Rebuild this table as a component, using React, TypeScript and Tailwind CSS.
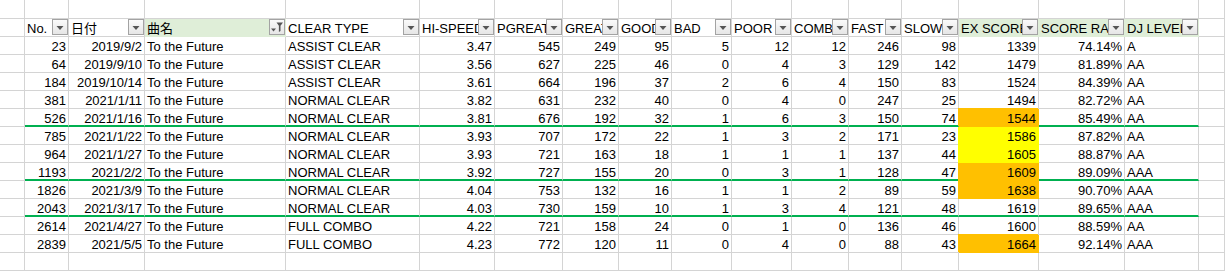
import React from "react";

type Col = { w: string; label: string; align: "l" | "r"; green?: boolean; filtered?: boolean };

const cols: Col[] = [
  { w: "w-[25px]", label: "", align: "l" },
  { w: "w-[44px]", label: "No.", align: "r" },
  { w: "w-[76px]", label: "日付", align: "r" },
  { w: "w-[141px]", label: "曲名", align: "l", green: true, filtered: true },
  { w: "w-[134px]", label: "CLEAR TYPE", align: "l" },
  { w: "w-[75px]", label: "HI-SPEED", align: "r" },
  { w: "w-[68px]", label: "PGREAT", align: "r" },
  { w: "w-[56px]", label: "GREAT", align: "r" },
  { w: "w-[53px]", label: "GOOD", align: "r" },
  { w: "w-[60px]", label: "BAD", align: "r" },
  { w: "w-[60px]", label: "POOR", align: "r" },
  { w: "w-[57px]", label: "COMBO", align: "r" },
  { w: "w-[53px]", label: "FAST", align: "r" },
  { w: "w-[57px]", label: "SLOW", align: "r" },
  { w: "w-[80px]", label: "EX SCORE", align: "r", green: true },
  { w: "w-[86px]", label: "SCORE RATE", align: "r", green: true },
  { w: "w-[74px]", label: "DJ LEVEL", align: "l", green: true },
  { w: "flex-1", label: "", align: "l" },
];

// fill: o = orange, y = yellow, O = orange covering the gridline above too
type Row = { v: string[]; fill?: "o" | "y" | "O"; line?: boolean };

const rows: Row[] = [
  { v: ["23", "2019/9/2", "ASSIST CLEAR", "3.47", "545", "249", "95", "5", "12", "12", "246", "98", "1339", "74.14%", "A"] },
  { v: ["64", "2019/9/10", "ASSIST CLEAR", "3.56", "627", "225", "46", "0", "4", "3", "129", "142", "1479", "81.89%", "AA"] },
  { v: ["184", "2019/10/14", "ASSIST CLEAR", "3.61", "664", "196", "37", "2", "6", "4", "150", "83", "1524", "84.39%", "AA"] },
  { v: ["381", "2021/1/11", "NORMAL CLEAR", "3.82", "631", "232", "40", "0", "4", "0", "247", "25", "1494", "82.72%", "AA"] },
  { v: ["526", "2021/1/16", "NORMAL CLEAR", "3.81", "676", "192", "32", "1", "6", "3", "150", "74", "1544", "85.49%", "AA"], fill: "O", line: true },
  { v: ["785", "2021/1/22", "NORMAL CLEAR", "3.93", "707", "172", "22", "1", "3", "2", "171", "23", "1586", "87.82%", "AA"], fill: "y" },
  { v: ["964", "2021/1/27", "NORMAL CLEAR", "3.93", "721", "163", "18", "1", "1", "1", "137", "44", "1605", "88.87%", "AA"], fill: "y" },
  { v: ["1193", "2021/2/2", "NORMAL CLEAR", "3.92", "727", "155", "20", "0", "3", "1", "128", "47", "1609", "89.09%", "AAA"], fill: "o", line: true },
  { v: ["1826", "2021/3/9", "NORMAL CLEAR", "4.04", "753", "132", "16", "1", "1", "2", "89", "59", "1638", "90.70%", "AAA"], fill: "o" },
  { v: ["2043", "2021/3/17", "NORMAL CLEAR", "4.03", "730", "159", "10", "1", "3", "4", "121", "48", "1619", "89.65%", "AAA"], line: true },
  { v: ["2614", "2021/4/27", "FULL COMBO", "4.22", "721", "158", "24", "0", "1", "0", "136", "46", "1600", "88.59%", "AA"] },
  { v: ["2839", "2021/5/5", "FULL COMBO", "4.23", "772", "120", "11", "0", "4", "0", "88", "43", "1664", "92.14%", "AAA"], fill: "O" },
];

const fillCls = {
  o: "bg-[#FFC000] border-r-[#FFC000] border-b-[#FFC000] shadow-[-1px_0_0_#FFC000]",
  O: "bg-[#FFC000] border-r-[#FFC000] border-b-[#FFC000] shadow-[-1px_-1px_0_#FFC000]",
  y: "bg-[#FFFF00] border-r-[#FFFF00] border-b-[#FFFF00] shadow-[-1px_0_0_#FFFF00]",
};

const FilterButton = ({ filtered }: { filtered?: boolean }) => (
  <div className="w-[16px] h-[16px] shrink-0 border border-[#a3a3a3] bg-gradient-to-b from-[#fafafa] to-[#e6e6e6] flex items-center justify-center">
    {filtered ? (
      <svg width="14" height="14" viewBox="0 0 14 14">
        <path d="M1 8.5h5l-2.5 3z" fill="#555" />
        <path d="M6.5 2.5h6.5l-2.5 3.2v5.3l-1.6 1v-6.3z" fill="#555" />
      </svg>
    ) : (
      <svg width="14" height="14" viewBox="0 0 14 14">
        <path d="M3.5 6h7l-3.5 4z" fill="#555" />
      </svg>
    )}
  </div>
);

const base = "h-[18px] box-border border-r border-b border-[#d4d4d4] shrink-0 overflow-hidden whitespace-nowrap leading-[17px] pt-px";

export default function App() {
  return (
    <div className="w-[1225px] h-[271px] bg-white overflow-hidden text-[13px] text-black font-['Liberation_Sans','Noto_Sans_CJK_JP',sans-serif]">
      {/* empty first row */}
      <div className="flex h-[19px]">
        {cols.map((c, i) => (
          <div key={i} className={`${c.w} h-[19px] box-border border-r border-b border-[#d4d4d4] shrink-0`} />
        ))}
      </div>
      {/* header row with filter buttons */}
      <div className="flex">
        {cols.map((c, i) =>
          c.label ? (
            <div
              key={i}
              className={`${c.w} h-[18px] box-border border-r border-b shrink-0 flex ${
                c.green ? "bg-[#dfeed8] border-[#dfeed8]" : "border-[#d4d4d4]"
              }`}
            >
              <span className="flex-1 min-w-0 overflow-hidden whitespace-nowrap pl-[2px] leading-[17px] pt-px">{c.label}</span>
              <FilterButton filtered={c.filtered} />
            </div>
          ) : (
            <div key={i} className={`${c.w} h-[18px] box-border border-r border-b border-[#d4d4d4] shrink-0`} />
          )
        )}
      </div>
      {rows.map((r, ri) => {
        const vals = ["", r.v[0], r.v[1], "To the Future", ...r.v.slice(2), ""];
        return (
          <div key={ri} className="flex">
            {cols.map((c, i) => {
              const inTable = i >= 1 && i <= 16;
              const filled = i === 14 && r.fill ? fillCls[r.fill] : "";
              const line = r.line && inTable ? "border-b-2 border-b-[#00B050]" : "";
              return (
                <div
                  key={i}
                  className={`${base} ${c.w} ${c.align === "r" ? "text-right pr-[2px]" : "text-left pl-[2px]"} ${filled} ${line}`}
                >
                  {vals[i]}
                </div>
              );
            })}
          </div>
        );
      })}
      {/* empty last row */}
      <div className="flex">
        {cols.map((c, i) => (
          <div key={i} className={`${c.w} h-[18px] box-border border-r border-b border-[#d4d4d4] shrink-0`} />
        ))}
      </div>
    </div>
  );
}
